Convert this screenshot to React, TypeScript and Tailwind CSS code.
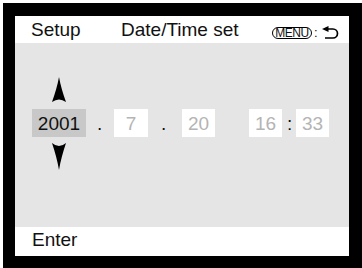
import React from 'react';

const FONT = { fontFamily: '"Liberation Sans", Arial, sans-serif' };

function UpArrow() {
  return (
    <svg width="14" height="25" viewBox="0 0 14 25" className="block">
      <path d="M7 0 C8.5 8 11 17 14 25 Q7 20 0 25 C3 17 5.5 8 7 0 Z" fill="#000" />
    </svg>
  );
}

function DownArrow() {
  return (
    <svg width="14" height="27" viewBox="0 0 14 27" className="block">
      <path d="M7 27 C8.5 18 11 9 14 0 Q7 6 0 0 C3 9 5.5 18 7 27 Z" fill="#000" />
    </svg>
  );
}

function ReturnIcon() {
  return (
    <svg width="17" height="13" viewBox="0 0 17 13" className="block">
      <path d="M0 3 L6.5 0 L6.5 6 Z" fill="#000" />
      <path d="M5 3 H11 A4.5 4.5 0 0 1 11 12 H3" fill="none" stroke="#000" strokeWidth="1.7" />
    </svg>
  );
}

function Field({ value, selected, w }: { value: string; selected?: boolean; w: string }) {
  return (
    <div
      className={[
        'flex h-[28px] items-center justify-center text-[19px] leading-[19px]',
        w,
        selected ? 'bg-[#c8c8c8] text-[#111]' : 'bg-white text-[#b4b4b4]',
      ].join(' ')}
    >
      {value}
    </div>
  );
}

export default function App() {
  return (
    <div className="h-[268px] w-[362px] overflow-hidden bg-white pl-[3px] pt-[3px]" style={FONT}>
      <div className="h-[265px] w-[359px] bg-black pl-[12px] pt-[13px]">
        <div className="flex h-[240px] w-[334px] flex-col">
          {/* header */}
          <div className="flex h-[27px] items-start bg-white pl-[16px] pt-[4px] text-[19px] leading-[19px] text-[#111]">
            <span className="w-[90px]">Setup</span>
            <span className="w-[151px]">Date/Time set</span>
            <div className="mt-[6px] flex items-center">
              <span className="flex h-[12px] w-[40px] items-center justify-center rounded-full border border-black text-[12px] leading-none tracking-[-0.5px]">
                MENU
              </span>
              <span className="ml-[2px] mr-[4px] text-[13px] leading-none">:</span>
              <ReturnIcon />
            </div>
          </div>

          {/* body */}
          <div className="flex h-[184px] items-start bg-[#e5e5e5] pl-[17px] pt-[34px] text-[19px] leading-[19px] text-[#111]">
            <div className="flex w-[54px] flex-col items-center">
              <UpArrow />
              <div className="mt-[7px]">
                <Field value="2001" selected w="w-[54px]" />
              </div>
              <div className="mt-[6px]">
                <DownArrow />
              </div>
            </div>
            <div className="mt-[32px] flex h-[28px] items-center">
              <span className="ml-[11px] mr-[12px] w-[5px] text-center">.</span>
              <Field value="7" w="w-[34px]" />
              <span className="ml-[13px] mr-[16px] w-[5px] text-center">.</span>
              <Field value="20" w="w-[33px]" />
              <div className="ml-[34px]">
                <Field value="16" w="w-[33px]" />
              </div>
              <span className="ml-[5px] mr-[4px] w-[5px] text-center">:</span>
              <Field value="33" w="w-[33px]" />
            </div>
          </div>

          {/* footer */}
          <div className="h-[29px] bg-white pl-[17px] pt-[3px] text-[19px] leading-[19px] text-[#111]">
            Enter
          </div>
        </div>
      </div>
    </div>
  );
}
